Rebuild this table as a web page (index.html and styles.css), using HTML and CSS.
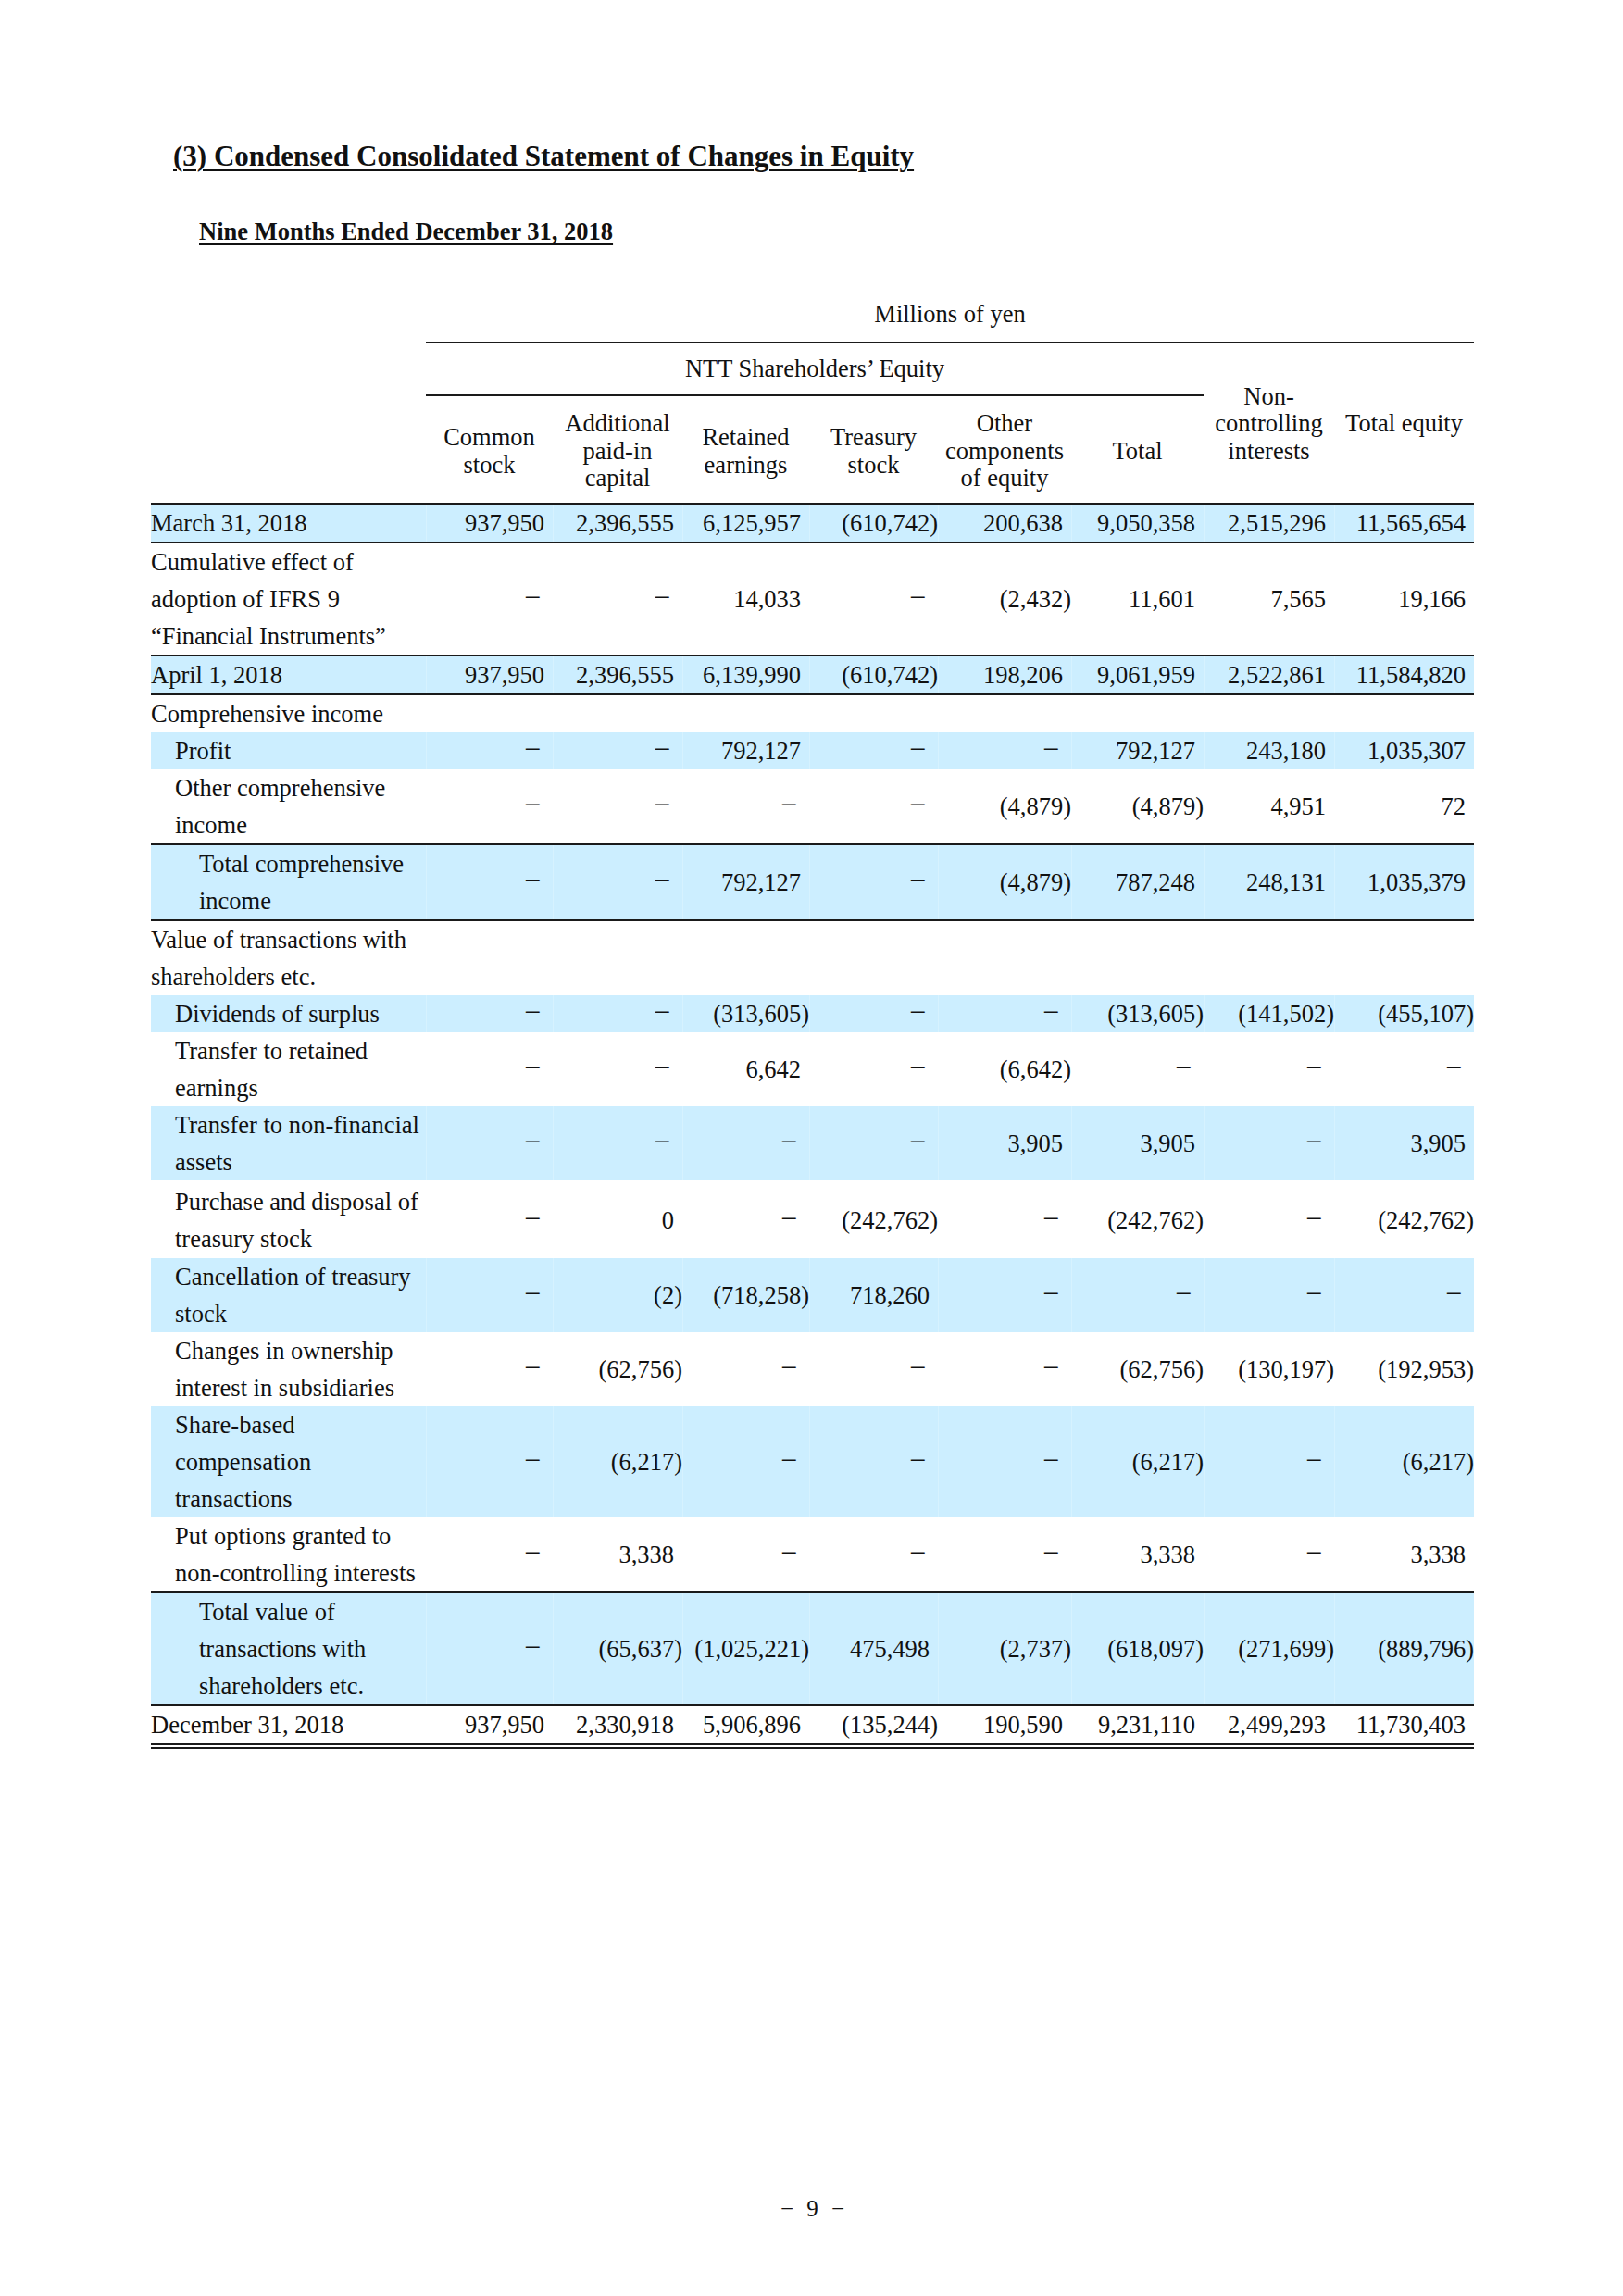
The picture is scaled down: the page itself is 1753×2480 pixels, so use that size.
FILE: index.html
```html
<!DOCTYPE html>
<html lang="en">
<head>
<meta charset="utf-8">
<title>Condensed Consolidated Statement of Changes in Equity</title>
<link rel="stylesheet" href="styles.css">
</head>
<body>
<div class="page">
  <h1 class="title">(3) Condensed Consolidated Statement of Changes in Equity</h1>
  <h2 class="subtitle">Nine Months Ended December 31, 2018</h2>

  <table class="equity">
    <colgroup>
      <col class="c-label">
      <col class="c-common">
      <col class="c-add">
      <col class="c-ret">
      <col class="c-tre">
      <col class="c-oth">
      <col class="c-tot">
      <col class="c-nci">
      <col class="c-te">
    </colgroup>
    <thead>
      <tr class="units">
        <th></th>
        <th colspan="8">Millions of yen</th>
      </tr>
      <tr class="group">
        <th></th>
        <th colspan="6" class="grp">NTT Shareholders’ Equity</th>
        <th rowspan="2" class="span">Non-<br>controlling<br>interests</th>
        <th rowspan="2" class="span">Total equity</th>
      </tr>
      <tr class="cols">
        <th></th>
        <th>Common<br>stock</th>
        <th>Additional<br>paid-in<br>capital</th>
        <th>Retained<br>earnings</th>
        <th>Treasury<br>stock</th>
        <th>Other<br>components<br>of equity</th>
        <th>Total</th>
      </tr>
    </thead>
    <tbody>
      <tr class="blue rule">
        <td class="lbl">March 31, 2018</td>
        <td class="v">937,950</td><td class="v">2,396,555</td><td class="v">6,125,957</td><td class="v neg">(610,742)</td><td class="v">200,638</td><td class="v">9,050,358</td><td class="v">2,515,296</td><td class="v">11,565,654</td>
      </tr>
      <tr class="rule">
        <td class="lbl">Cumulative effect of<br>adoption of IFRS 9<br>“Financial Instruments”</td>
        <td class="v nil"><span class="dash">−</span></td><td class="v nil"><span class="dash">−</span></td><td class="v">14,033</td><td class="v nil"><span class="dash">−</span></td><td class="v neg">(2,432)</td><td class="v">11,601</td><td class="v">7,565</td><td class="v">19,166</td>
      </tr>
      <tr class="blue rule">
        <td class="lbl">April 1, 2018</td>
        <td class="v">937,950</td><td class="v">2,396,555</td><td class="v">6,139,990</td><td class="v neg">(610,742)</td><td class="v">198,206</td><td class="v">9,061,959</td><td class="v">2,522,861</td><td class="v">11,584,820</td>
      </tr>
      <tr class="rule">
        <td class="lbl">Comprehensive income</td>
        <td></td><td></td><td></td><td></td><td></td><td></td><td></td><td></td>
      </tr>
      <tr class="blue">
        <td class="lbl i1">Profit</td>
        <td class="v nil"><span class="dash">−</span></td><td class="v nil"><span class="dash">−</span></td><td class="v">792,127</td><td class="v nil"><span class="dash">−</span></td><td class="v nil"><span class="dash">−</span></td><td class="v">792,127</td><td class="v">243,180</td><td class="v">1,035,307</td>
      </tr>
      <tr>
        <td class="lbl i1">Other comprehensive<br>income</td>
        <td class="v nil"><span class="dash">−</span></td><td class="v nil"><span class="dash">−</span></td><td class="v nil"><span class="dash">−</span></td><td class="v nil"><span class="dash">−</span></td><td class="v neg">(4,879)</td><td class="v neg">(4,879)</td><td class="v">4,951</td><td class="v">72</td>
      </tr>
      <tr class="blue rule">
        <td class="lbl i2">Total comprehensive<br>income</td>
        <td class="v nil"><span class="dash">−</span></td><td class="v nil"><span class="dash">−</span></td><td class="v">792,127</td><td class="v nil"><span class="dash">−</span></td><td class="v neg">(4,879)</td><td class="v">787,248</td><td class="v">248,131</td><td class="v">1,035,379</td>
      </tr>
      <tr class="rule">
        <td class="lbl">Value of transactions with<br>shareholders etc.</td>
        <td></td><td></td><td></td><td></td><td></td><td></td><td></td><td></td>
      </tr>
      <tr class="blue">
        <td class="lbl i1">Dividends of surplus</td>
        <td class="v nil"><span class="dash">−</span></td><td class="v nil"><span class="dash">−</span></td><td class="v neg">(313,605)</td><td class="v nil"><span class="dash">−</span></td><td class="v nil"><span class="dash">−</span></td><td class="v neg">(313,605)</td><td class="v neg">(141,502)</td><td class="v neg">(455,107)</td>
      </tr>
      <tr>
        <td class="lbl i1">Transfer to retained<br>earnings</td>
        <td class="v nil"><span class="dash">−</span></td><td class="v nil"><span class="dash">−</span></td><td class="v">6,642</td><td class="v nil"><span class="dash">−</span></td><td class="v neg">(6,642)</td><td class="v nil"><span class="dash">−</span></td><td class="v nil"><span class="dash">−</span></td><td class="v nil"><span class="dash">−</span></td>
      </tr>
      <tr class="blue">
        <td class="lbl i1">Transfer to non-financial<br>assets</td>
        <td class="v nil"><span class="dash">−</span></td><td class="v nil"><span class="dash">−</span></td><td class="v nil"><span class="dash">−</span></td><td class="v nil"><span class="dash">−</span></td><td class="v">3,905</td><td class="v">3,905</td><td class="v nil"><span class="dash">−</span></td><td class="v">3,905</td>
      </tr>
      <tr class="tall">
        <td class="lbl i1">Purchase and disposal of<br>treasury stock</td>
        <td class="v nil"><span class="dash">−</span></td><td class="v">0</td><td class="v nil"><span class="dash">−</span></td><td class="v neg">(242,762)</td><td class="v nil"><span class="dash">−</span></td><td class="v neg">(242,762)</td><td class="v nil"><span class="dash">−</span></td><td class="v neg">(242,762)</td>
      </tr>
      <tr class="blue">
        <td class="lbl i1">Cancellation of treasury<br>stock</td>
        <td class="v nil"><span class="dash">−</span></td><td class="v neg">(2)</td><td class="v neg">(718,258)</td><td class="v">718,260</td><td class="v nil"><span class="dash">−</span></td><td class="v nil"><span class="dash">−</span></td><td class="v nil"><span class="dash">−</span></td><td class="v nil"><span class="dash">−</span></td>
      </tr>
      <tr>
        <td class="lbl i1">Changes in ownership<br>interest in subsidiaries</td>
        <td class="v nil"><span class="dash">−</span></td><td class="v neg">(62,756)</td><td class="v nil"><span class="dash">−</span></td><td class="v nil"><span class="dash">−</span></td><td class="v nil"><span class="dash">−</span></td><td class="v neg">(62,756)</td><td class="v neg">(130,197)</td><td class="v neg">(192,953)</td>
      </tr>
      <tr class="blue">
        <td class="lbl i1">Share-based<br>compensation<br>transactions</td>
        <td class="v nil"><span class="dash">−</span></td><td class="v neg">(6,217)</td><td class="v nil"><span class="dash">−</span></td><td class="v nil"><span class="dash">−</span></td><td class="v nil"><span class="dash">−</span></td><td class="v neg">(6,217)</td><td class="v nil"><span class="dash">−</span></td><td class="v neg">(6,217)</td>
      </tr>
      <tr>
        <td class="lbl i1">Put options granted to<br>non-controlling interests</td>
        <td class="v nil"><span class="dash">−</span></td><td class="v">3,338</td><td class="v nil"><span class="dash">−</span></td><td class="v nil"><span class="dash">−</span></td><td class="v nil"><span class="dash">−</span></td><td class="v">3,338</td><td class="v nil"><span class="dash">−</span></td><td class="v">3,338</td>
      </tr>
      <tr class="blue rule">
        <td class="lbl i2">Total value of<br>transactions with<br>shareholders etc.</td>
        <td class="v nil"><span class="dash">−</span></td><td class="v neg">(65,637)</td><td class="v neg">(1,025,221)</td><td class="v">475,498</td><td class="v neg">(2,737)</td><td class="v neg">(618,097)</td><td class="v neg">(271,699)</td><td class="v neg">(889,796)</td>
      </tr>
      <tr class="rule final">
        <td class="lbl">December 31, 2018</td>
        <td class="v">937,950</td><td class="v">2,330,918</td><td class="v">5,906,896</td><td class="v neg">(135,244)</td><td class="v">190,590</td><td class="v">9,231,110</td><td class="v">2,499,293</td><td class="v">11,730,403</td>
      </tr>
    </tbody>
  </table>

  <div class="folio">− 9 −</div>
</div>
</body>
</html>
```

FILE: styles.css
```css
* {
  box-sizing: border-box;
}

body {
  margin: 0;
  background: #ffffff;
  color: #111111;
  font-family: "Liberation Serif", "Times New Roman", serif;
}

.page {
  width: 1753px;
  min-height: 2480px;
  padding: 151px 161px 79px 163px;
  display: flex;
  flex-direction: column;
}

.title {
  margin: 0 0 0 24px;
  font-size: 31px;
  font-weight: bold;
  line-height: 36px;
  text-decoration: underline;
  text-decoration-thickness: 2px;
  text-underline-offset: 4px;
}

.subtitle {
  margin: 45px 0 0 52px;
  font-size: 26.5px;
  font-weight: bold;
  line-height: 36px;
  text-decoration: underline;
  text-decoration-thickness: 2px;
  text-underline-offset: 4px;
}

.equity {
  margin-top: 51px;
  width: 1429px;
  border-collapse: collapse;
  table-layout: fixed;
  font-size: 26.5px;
}

.c-label { width: 297px; }
.c-common { width: 137px; }
.c-add { width: 140px; }
.c-ret { width: 137px; }
.c-tre { width: 139px; }
.c-oth { width: 144px; }
.c-tot { width: 143px; }
.c-nci { width: 141px; }
.c-te { width: 151px; }

.equity th {
  font-weight: normal;
  padding: 0;
  text-align: center;
  vertical-align: middle;
}

.units th {
  line-height: 40px;
  padding-bottom: 10px;
}

.group th {
  height: 57px;
  line-height: 40px;
  padding: 6px 0 7px;
}

.group .grp {
  border-top: 2px solid #1a1a1a;
  border-bottom: 2px solid #1a1a1a;
}

.group .span {
  border-top: 2px solid #1a1a1a;
  line-height: 29.5px;
  padding: 2px 0 0;
}

.cols th {
  height: 117px;
  line-height: 29.5px;
  padding-top: 4px;
}

.equity td {
  padding: 0;
  line-height: 40px;
  vertical-align: middle;
  white-space: nowrap;
}

.equity tr.rule td {
  border-top: 2px solid #1a1a1a;
}

.equity tr.final td {
  border-bottom: 6px double #1a1a1a;
}

.equity tr.blue td {
  background: #cceeff;
}

.equity tr.blue td + td {
  box-shadow: inset 1px 0 0 #d6f2ff;
}

.equity tr.tall td {
  padding-top: 3px;
  padding-bottom: 1px;
}

.lbl {
  text-align: left;
}

.i1 {
  padding-left: 26px !important;
}

.i2 {
  padding-left: 52px !important;
}

.v {
  text-align: right;
  padding-right: 9px !important;
}

.v.neg {
  padding-right: 0 !important;
}

.v.nil {
  padding-right: 13px !important;
}

.dash {
  font-family: "Liberation Serif", serif;
  font-size: 32px;
  line-height: 1;
}

.folio {
  margin-top: auto;
  text-align: center;
  font-size: 25px;
  line-height: 30px;
  word-spacing: 8px;
}
```
